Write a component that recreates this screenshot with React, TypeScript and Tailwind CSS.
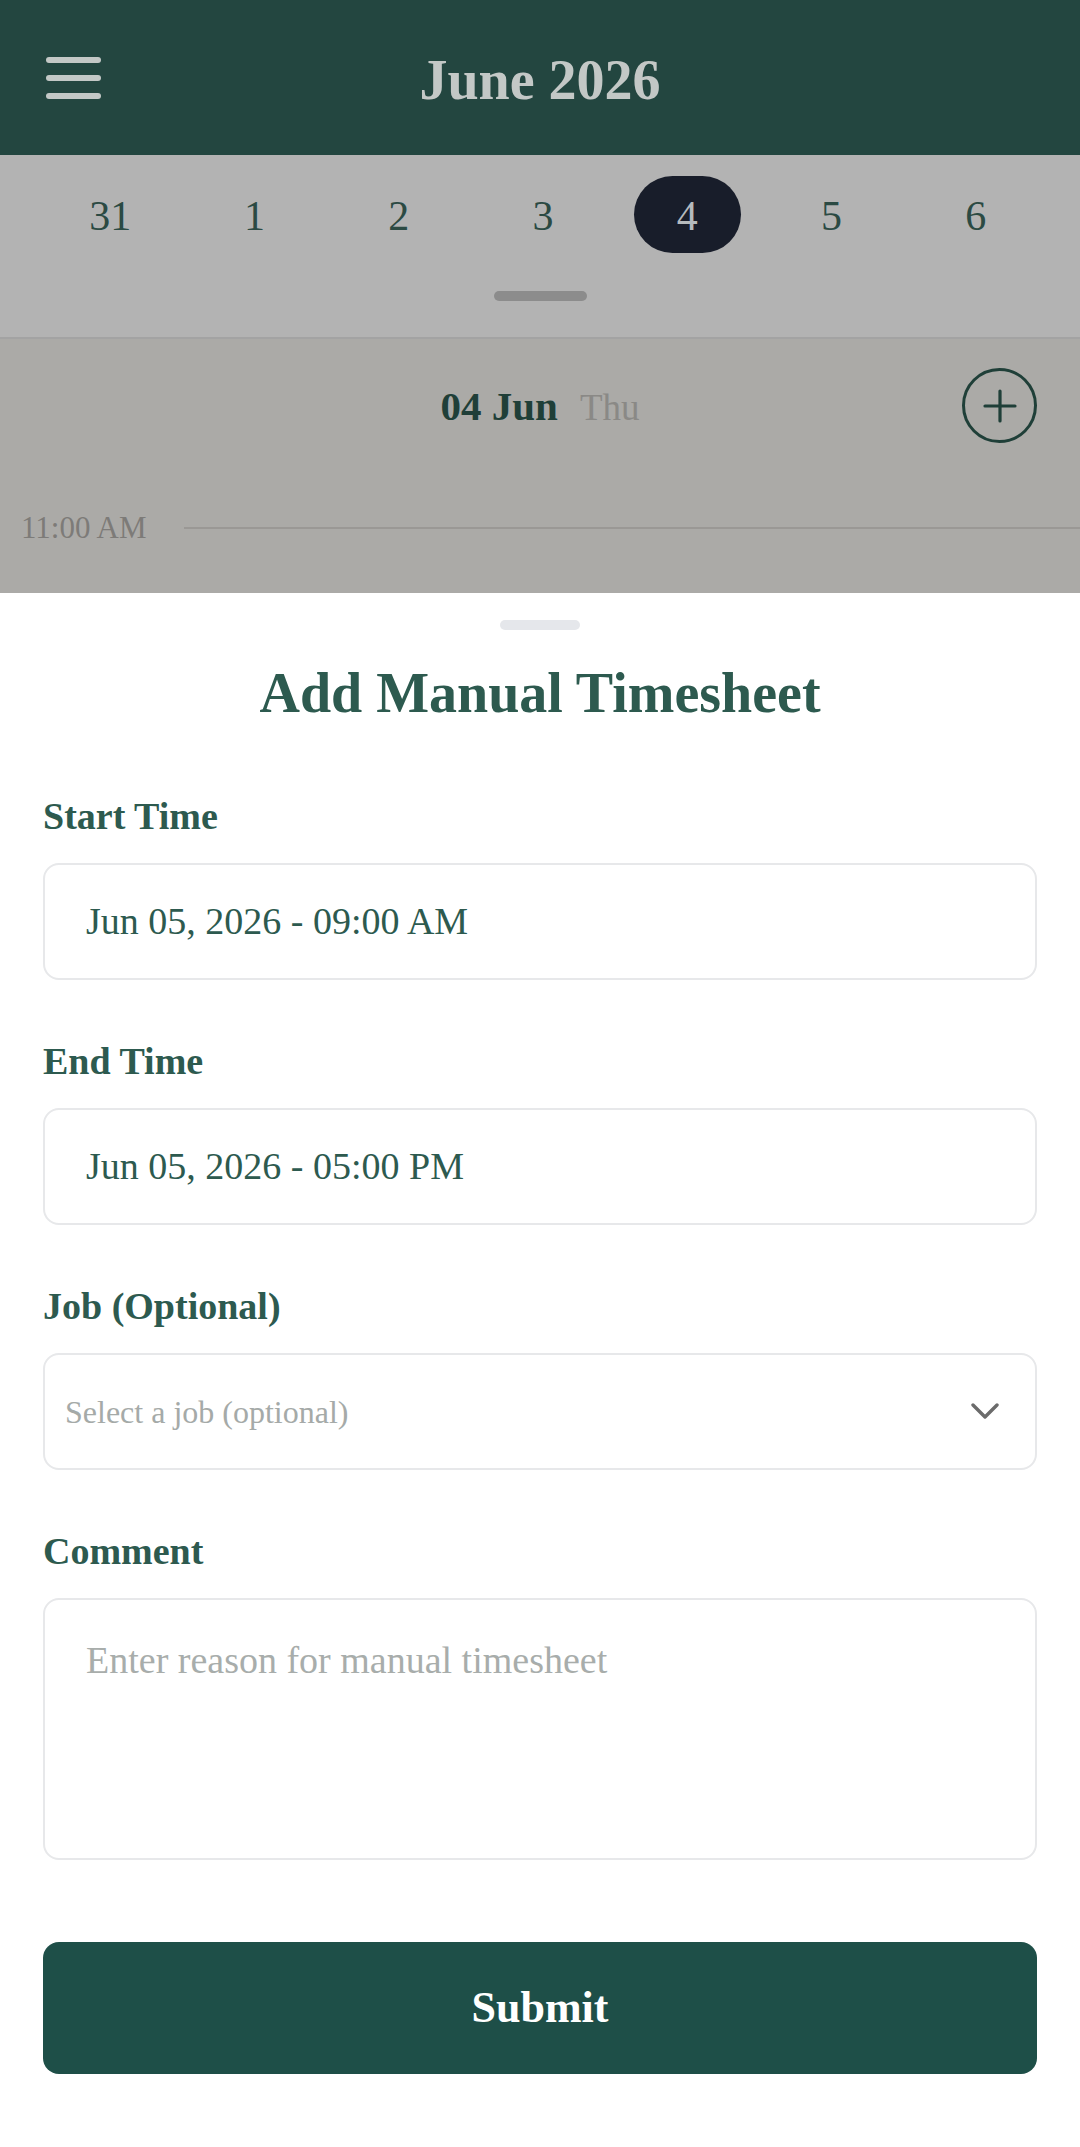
import React from 'react';

const serif = "font-['Liberation_Serif','Times_New_Roman',serif]";

const days = [
  { n: '31', active: false },
  { n: '1', active: false },
  { n: '2', active: false },
  { n: '3', active: false },
  { n: '4', active: true },
  { n: '5', active: false },
  { n: '6', active: false },
];

const Field: React.FC<{ label: string; children: React.ReactNode }> = ({ label, children }) => (
  <div className="flex flex-col">
    <label className="text-[38px] leading-[44px] font-bold text-[#2d5a4f]">{label}</label>
    <div className="mt-[25px]">{children}</div>
  </div>
);

export default function App() {
  return (
    <div className={`${serif} w-[1080px] h-[2147px] bg-white flex flex-col overflow-hidden`}>
      {/* top bar (dimmed behind sheet) */}
      <header className="h-[155px] bg-[#234640] grid grid-cols-[1fr_auto_1fr] items-center px-[46px]">
        <button className="flex flex-col gap-[12px] w-[55px]">
          <span className="h-[6px] rounded-full bg-[#c3c8c6]" />
          <span className="h-[6px] rounded-full bg-[#c3c8c6]" />
          <span className="h-[6px] rounded-full bg-[#c3c8c6]" />
        </button>
        <h1 className="text-[56px] font-bold text-[#c3c8c6] leading-none pt-[4px]">June 2026</h1>
        <div />
      </header>

      {/* week strip */}
      <div className="bg-[#b3b3b3] border-b-2 border-[#a3a3a3] pt-[21px] pb-[36px] flex flex-col items-center">
        <div className="w-full grid grid-cols-7 pl-[38px] pr-[32px]">
          {days.map((d) => (
            <div key={d.n} className="flex justify-center">
              <span
                className={
                  d.active
                    ? 'w-[107px] h-[77px] pt-[4px] rounded-full bg-[#181d2a] text-[#b5babd] text-[42px] flex items-center justify-center'
                    : 'h-[77px] pt-[4px] text-[42px] text-[#2b4a43] flex items-center justify-center'
                }
              >
                {d.n}
              </span>
            </div>
          ))}
        </div>
        <div className="mt-[38px] w-[93px] h-[10px] rounded-full bg-[#8c8c8c]" />
      </div>

      {/* day view */}
      <div className="bg-[#abaaa7] h-[254px] flex flex-col">
        <div className="relative mt-[29px] h-[75px] flex items-center justify-center">
          <div className="flex items-baseline gap-[22px] pt-[2px]">
            <span className="text-[41px] font-bold text-[#1f3f38]">04 Jun</span>
            <span className="text-[37px] text-[#8a8986]">Thu</span>
          </div>
          <div className="absolute right-[43px] top-0 w-[75px] h-[75px] rounded-full border-[3px] border-[#1f3f38] flex items-center justify-center">
            <svg width="34" height="34" viewBox="0 0 34 34" fill="none">
              <path d="M17 2v30M2 17h30" stroke="#1f3f38" strokeWidth="3.2" strokeLinecap="round" />
            </svg>
          </div>
        </div>
        <div className="mt-[69px] flex items-center">
          <span className="pl-[21px] w-[184px] text-[31px] text-[#7d7b78] leading-none">11:00 AM</span>
          <div className="flex-1 h-[2px] bg-[#9a9895]" />
        </div>
      </div>

      {/* bottom sheet */}
      <div className="flex-1 bg-white flex flex-col px-[43px]">
        <div className="mt-[27px] self-center w-[80px] h-[10px] rounded-full bg-[#e5e7eb]" />
        <h2 className="mt-[33px] text-center text-[56px] leading-[60px] font-bold text-[#2d5a4f]">
          Add Manual Timesheet
        </h2>

        <div className="mt-[71px] flex flex-col gap-[59px]">
          <Field label="Start Time">
            <div className="h-[117px] rounded-[16px] border-2 border-[#e7e8ea] flex items-center px-[41px] text-[38px] text-[#2d5a4f]">
              Jun 05, 2026 - 09:00 AM
            </div>
          </Field>
          <Field label="End Time">
            <div className="h-[117px] rounded-[16px] border-2 border-[#e7e8ea] flex items-center px-[41px] text-[38px] text-[#2d5a4f]">
              Jun 05, 2026 - 05:00 PM
            </div>
          </Field>
          <Field label="Job (Optional)">
            <div className="h-[117px] rounded-[16px] border-2 border-[#e7e8ea] flex items-center justify-between pl-[20px] pr-[36px]">
              <span className="text-[32px] text-[#a5aaa8]">Select a job (optional)</span>
              <svg width="28" height="17" viewBox="0 0 28 17" fill="none">
                <path d="M2 2l12 12L26 2" stroke="#6b6b6b" strokeWidth="3.4" strokeLinecap="round" strokeLinejoin="round" />
              </svg>
            </div>
          </Field>
          <Field label="Comment">
            <div className="h-[262px] rounded-[16px] border-2 border-[#e7e8ea] px-[41px] pt-[32px] text-[38px] text-[#a8adab]">
              Enter reason for manual timesheet
            </div>
          </Field>
        </div>

        <button className="mt-[82px] h-[132px] rounded-[16px] bg-[#1e4f48] text-white text-[44px] font-bold flex items-center justify-center">
          Submit
        </button>
      </div>
    </div>
  );
}
